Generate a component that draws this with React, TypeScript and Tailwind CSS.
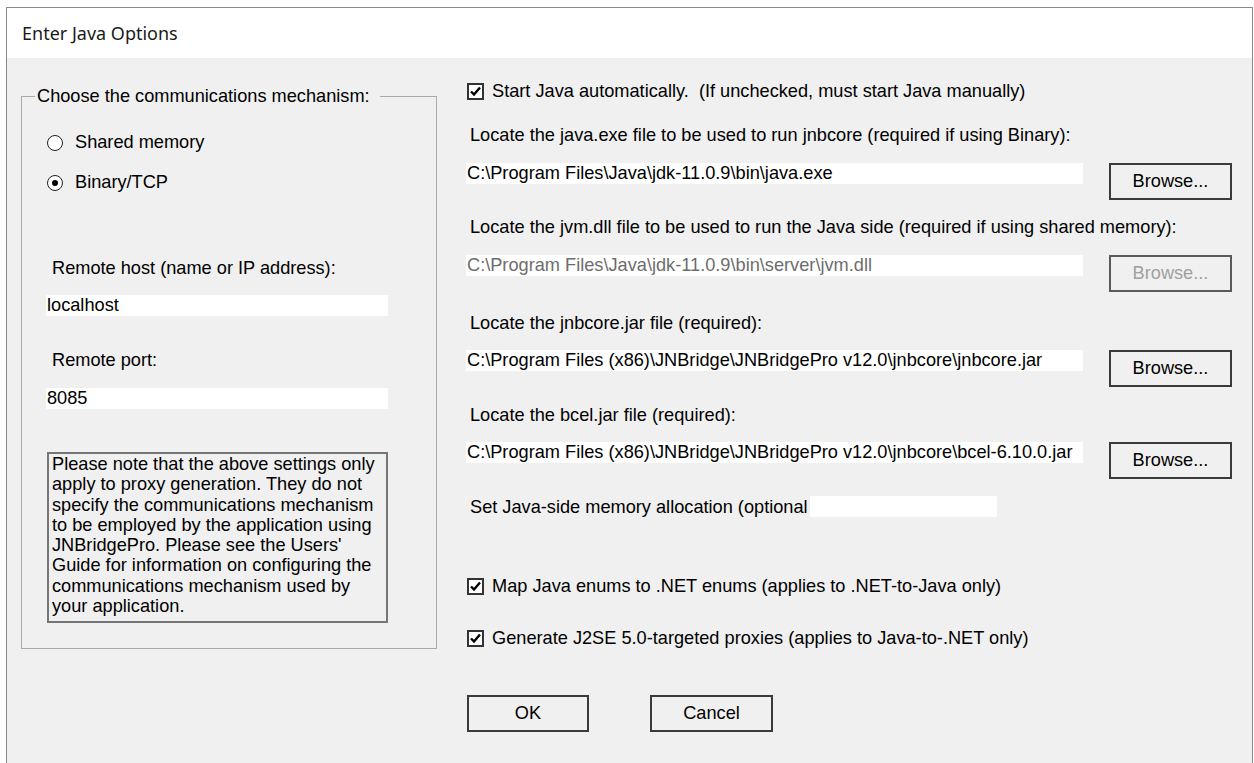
import React from 'react';

// Win32-style "Enter Java Options" dialog

const CheckBox = ({ checked = true }: { checked?: boolean }) => (
  <span className="flex h-[17px] w-[17px] shrink-0 items-center justify-center border-2 border-[#333] bg-white">
    {checked && (
      <svg width="13" height="13" viewBox="0 0 13 13">
        <path d="M2 6.5 L5 9.5 L11 2.5" fill="none" stroke="#000" strokeWidth="2.4" />
      </svg>
    )}
  </span>
);

const Radio = ({ checked = false }: { checked?: boolean }) => (
  <span className="flex h-[16px] w-[16px] shrink-0 items-center justify-center rounded-full border-[1.5px] border-[#222] bg-white">
    {checked && <span className="h-[6px] w-[6px] rounded-full bg-black" />}
  </span>
);

const TextBox = ({ value, w, disabled }: { value: string; w: string; disabled?: boolean }) => (
  <div
    className={`h-[21px] ${w} overflow-hidden whitespace-nowrap bg-white pl-[1px] leading-[21px] ${
      disabled ? 'text-[#6d6d6d]' : 'text-black'
    }`}
  >
    {value}
  </div>
);

const Button = ({ label, disabled }: { label: string; disabled?: boolean }) => (
  <button
    className={`flex h-[37px] w-[123px] items-center justify-center border-2 bg-[#f0f0f0] ${
      disabled ? 'border-[#5a5a5a] text-[#a0a0a0]' : 'border-[#3a3a3a] text-black'
    }`}
  >
    {label}
  </button>
);

const PathRow = ({ value, disabled, mt }: { value: string; disabled?: boolean; mt: string }) => (
  <div className={`flex items-start gap-[26px] ${mt}`}>
    <TextBox value={value} w="w-[617px]" disabled={disabled} />
    <Button label="Browse..." disabled={disabled} />
  </div>
);

const Label = ({ text, mt }: { text: string; mt: string }) => (
  <div className={`h-[20px] whitespace-nowrap pl-[4px] leading-[20px] ${mt}`}>{text}</div>
);

const CheckRow = ({ text, mt }: { text: string; mt: string }) => (
  <div className={`flex h-[20px] items-center gap-[8px] pl-[1px] leading-[20px] ${mt}`}>
    <CheckBox />
    <span className="whitespace-pre">{text}</span>
  </div>
);

export default function App() {
  return (
    <div className="h-[763px] w-[1254px] overflow-hidden bg-white pl-[6px] pt-[7px] font-['Liberation_Sans',Arial,sans-serif] text-[18.2px] text-black">
      <div className="flex h-[800px] w-[1247px] flex-col border border-[#8a8a8a]">
        <div className="flex h-[50px] shrink-0 items-center bg-white pl-[15px] font-['Noto_Sans',sans-serif] text-[18px] text-[#1a1a1a]">
          Enter Java Options
        </div>

        <div className="flex flex-1 bg-[#f0f0f0]">
          {/* communications mechanism group */}
          <div className="ml-[14px] mt-[28px]">
            <fieldset className="w-[416px] border border-[#a9a9a9] pb-[25px]">
              <legend className="ml-[13px] pl-[2px] pr-[10px] leading-[20px]">
                Choose the communications mechanism:
              </legend>
              <div className="flex flex-col">
                <div className="mt-[27px] flex h-[20px] items-center gap-[12px] pl-[25px]">
                  <Radio />
                  <span>Shared memory</span>
                </div>
                <div className="mt-[20px] flex h-[20px] items-center gap-[12px] pl-[25px]">
                  <Radio checked />
                  <span>Binary/TCP</span>
                </div>
                <div className="mt-[65px] h-[20px] pl-[30px] leading-[20px]">Remote host (name or IP address):</div>
                <div className="mt-[17px] pl-[24px]">
                  <TextBox value="localhost" w="w-[342px]" />
                </div>
                <div className="mt-[34px] h-[20px] pl-[30px] leading-[20px]">Remote port:</div>
                <div className="mt-[18px] pl-[24px]">
                  <TextBox value="8085" w="w-[342px]" />
                </div>
                <div className="ml-[25px] mt-[43px] h-[171px] w-[341px] border-2 border-[#767676] pl-[3px] leading-[20.3px]">
                  Please note that the above settings only
                  <br />
                  apply to proxy generation. They do not
                  <br />
                  specify the communications mechanism
                  <br />
                  to be employed by the application using
                  <br />
                  JNBridgePro. Please see the Users'
                  <br />
                  Guide for information on configuring the
                  <br />
                  communications mechanism used by
                  <br />
                  your application.
                </div>
              </div>
            </fieldset>
          </div>

          {/* java locations and options */}
          <div className="ml-[29px] flex flex-col">
            <CheckRow
              mt="mt-[23px]"
              text="Start Java automatically.  (If unchecked, must start Java manually)"
            />
            <Label mt="mt-[24px]" text="Locate the java.exe file to be used to run jnbcore (required if using Binary):" />
            <PathRow mt="mt-[18px]" value="C:\Program Files\Java\jdk-11.0.9\bin\java.exe" />
            <Label
              mt="mt-[17px]"
              text="Locate the jvm.dll file to be used to run the Java side (required if using shared memory):"
            />
            <PathRow mt="mt-[18px]" value="C:\Program Files\Java\jdk-11.0.9\bin\server\jvm.dll" disabled />
            <Label mt="mt-[21px]" text="Locate the jnbcore.jar file (required):" />
            <PathRow mt="mt-[17px]" value="C:\Program Files (x86)\JNBridge\JNBridgePro v12.0\jnbcore\jnbcore.jar" />
            <Label mt="mt-[18px]" text="Locate the bcel.jar file (required):" />
            <PathRow mt="mt-[17px]" value="C:\Program Files (x86)\JNBridge\JNBridgePro v12.0\jnbcore\bcel-6.10.0.jar" />
            <div className="mt-[17px] flex h-[21px] items-center">
              <div className="w-[344px] overflow-hidden whitespace-nowrap pl-[4px] leading-[20px]">
                Set Java-side memory allocation (optional
              </div>
              <div className="h-[21px] w-[187px] bg-white" />
            </div>
            <CheckRow mt="mt-[59px]" text="Map Java enums to .NET enums (applies to .NET-to-Java only)" />
            <CheckRow mt="mt-[32px]" text="Generate J2SE 5.0-targeted proxies (applies to Java-to-.NET only)" />
            <div className="mt-[47px] flex gap-[61px] pl-[1px]">
              <button className="flex h-[37px] w-[122px] items-center justify-center border-2 border-[#3a3a3a] bg-[#f0f0f0]">
                OK
              </button>
              <button className="flex h-[37px] w-[123px] items-center justify-center border-2 border-[#3a3a3a] bg-[#f0f0f0]">
                Cancel
              </button>
            </div>
          </div>
        </div>
      </div>
    </div>
  );
}
